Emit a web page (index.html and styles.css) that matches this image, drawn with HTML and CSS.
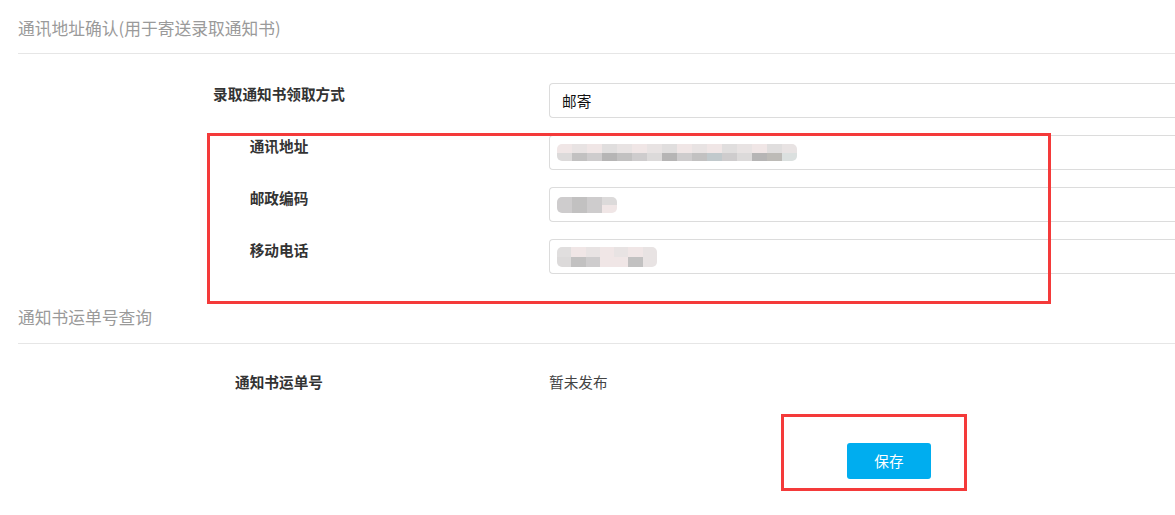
FILE: index.html
```html
<!DOCTYPE html>
<html lang="zh-CN">
<head>
<meta charset="utf-8">
<title>通讯地址确认</title>
<link rel="stylesheet" href="styles.css">
</head>
<body>
<div class="page">
  <section class="section">
    <h2 class="section-title">通讯地址确认(用于寄送录取通知书)</h2>
    <div class="form">
      <div class="row">
        <div class="label">录取通知书领取方式</div>
        <div class="field"><span class="field-text">邮寄</span></div>
      </div>
      <div class="row">
        <div class="label">通讯地址</div>
        <div class="field">
          <div class="mosaic mosaic-address">
            <div class="mrow">
              <i class="t1"></i><i class="t2"></i><i class="t1"></i><i class="t3"></i><i class="t2"></i><i class="t1"></i><i class="t2"></i><i class="t3"></i><i class="t1"></i><i class="t2"></i><i class="t1"></i><i class="t3"></i><i class="t2"></i><i class="t1"></i><i class="t3"></i><i class="t2"></i>
            </div>
            <div class="mrow">
              <i class="b1"></i><i class="b3"></i><i class="b2"></i><i class="b4"></i><i class="b3"></i><i class="b2"></i><i class="b1"></i><i class="b4"></i><i class="b2"></i><i class="b3"></i><i class="b5"></i><i class="b2"></i><i class="b1"></i><i class="b4"></i><i class="b6"></i><i class="b0"></i>
            </div>
          </div>
        </div>
      </div>
      <div class="row">
        <div class="label">邮政编码</div>
        <div class="field">
          <div class="mosaic mosaic-postal">
            <div class="mrow"><i class="b2"></i><i class="b3"></i><i class="b2"></i><i class="b1"></i></div>
            <div class="mrow"><i class="b2"></i><i class="b3"></i><i class="b2"></i><i class="t1"></i></div>
          </div>
        </div>
      </div>
      <div class="row">
        <div class="label">移动电话</div>
        <div class="field">
          <div class="mosaic mosaic-phone">
            <div class="mrow"><i class="t3"></i><i class="t1"></i><i class="t2"></i><i class="t1"></i><i class="t2"></i><i class="t1"></i><i class="t2"></i></div>
            <div class="mrow"><i class="b1"></i><i class="b3"></i><i class="b2"></i><i class="t1"></i><i class="t1"></i><i class="b3"></i><i class="t2"></i></div>
          </div>
        </div>
      </div>
    </div>
  </section>

  <section class="section section-second">
    <h2 class="section-title">通知书运单号查询</h2>
    <div class="info">
      <div class="row">
        <div class="label">通知书运单号</div>
        <div class="value">暂未发布</div>
      </div>
    </div>
    <div class="actions">
      <button class="btn-save" type="button">保存</button>
    </div>
  </section>

  <div class="mark mark-fields"></div>
  <div class="mark mark-save"></div>
</div>
</body>
</html>
```

FILE: styles.css
```css
html, body {
  margin: 0;
  padding: 0;
  background: #fff;
  overflow: hidden;
}

body {
  font-family: "Noto Sans CJK SC", "Noto Sans", sans-serif;
  color: #333;
}

.page {
  position: relative;
  padding-left: 18px;
  height: 515px;
}

.section-title {
  margin: 0;
  padding: 16px 0 13px;
  font-size: 16.75px;
  line-height: 24px;
  font-weight: normal;
  color: #9a9a9a;
  border-bottom: 1px solid #e6e6e6;
}

.form {
  display: flex;
  flex-direction: column;
  gap: 17px;
  padding: 29px 0 15px;
}

.row {
  display: flex;
  align-items: flex-start;
}

.label {
  width: 522px;
  flex: none;
  text-align: center;
  font-size: 14.65px;
  line-height: 22px;
  font-weight: bold;
  color: #333;
}

.field {
  flex: 1;
  margin-left: 9px;
  height: 35px;
  box-sizing: border-box;
  border: 1px solid #dcdcdc;
  border-right: none;
  border-radius: 4px 0 0 4px;
  padding: 0 12px 0 7px;
  display: flex;
  align-items: center;
}

.field-text {
  padding-left: 5px;
  font-size: 14.65px;
  color: #111;
  line-height: 20px;
}

.mosaic {
  display: flex;
  flex-direction: column;
  filter: blur(0.7px);
}

.mrow {
  display: flex;
}

.mrow i {
  display: block;
  width: 15px;
  height: 8px;
}

.mosaic-address .mrow i { height: 8.5px; }
.mosaic-postal .mrow i { height: 8px; }
.mosaic-phone .mrow i { height: 10px; width: 14.3px; }

.mosaic .mrow:first-child i:first-child { border-top-left-radius: 5px; }
.mosaic .mrow:last-child i:first-child { border-bottom-left-radius: 5px; }
.mosaic .mrow:first-child i:last-child { border-top-right-radius: 5px; }
.mosaic .mrow:last-child i:last-child { border-bottom-right-radius: 5px; }

.t1 { background: #f0e6e6; }
.t2 { background: #e8e3e3; }
.t3 { background: #e0dede; }
.b0 { background: #dbe0df; }
.b1 { background: #dcdada; }
.b2 { background: #cecccd; }
.b3 { background: #c2c1c1; }
.b4 { background: #b6b5b5; }
.b5 { background: #c1c9cc; }
.b6 { background: #bdbbb7; }

.section-second .section-title {
  padding-bottom: 14px;
}

.info {
  padding-top: 27px;
}

.value {
  margin-left: 9px;
  font-size: 14.65px;
  line-height: 22px;
  color: #444;
}

.actions {
  padding: 50px 0 0 829px;
}

.btn-save {
  display: block;
  width: 84px;
  height: 36px;
  border: none;
  border-radius: 3px;
  background: #00adef;
  color: #fff;
  font-family: inherit;
  font-size: 14.65px;
  line-height: 36px;
  padding: 0;
  cursor: pointer;
}

.mark {
  position: absolute;
  border: 3px solid #f43a3a;
  box-sizing: border-box;
  pointer-events: none;
}

.mark-fields {
  left: 207px;
  top: 133px;
  width: 844px;
  height: 171px;
}

.mark-save {
  left: 781px;
  top: 414px;
  width: 186px;
  height: 77px;
}
```
